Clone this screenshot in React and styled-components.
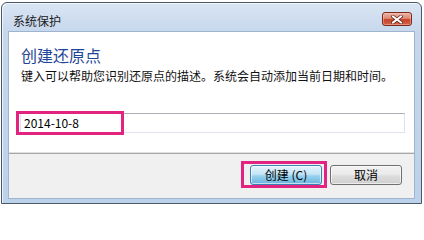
import React from "react";
import styled, { createGlobalStyle } from "styled-components";

const GlobalStyle = createGlobalStyle`
  html, body {
    margin: 0;
    padding: 0;
    background: #ffffff;
  }
  body {
    font-family: "Noto Sans CJK SC", "Noto Sans", sans-serif;
  }
`;

const Page = styled.div`
  width: 424px;
  height: 208px;
  padding: 2px 0 0 1px;
  box-sizing: border-box;
`;

const Window = styled.div`
  width: 421px;
  height: 202px;
  box-sizing: border-box;
  border: 1px solid #4b5666;
  border-radius: 6px 6px 0 0;
  background: linear-gradient(#d9e5f3 0px, #c6d7ec 30px, #bcd1ea 100%);
  box-shadow: inset 1px 1px 0 rgba(255, 255, 255, 0.7);
  display: flex;
  flex-direction: column;
`;

const TitleBar = styled.div`
  height: 28px;
  display: flex;
  justify-content: space-between;
  align-items: flex-start;
  padding: 0 9px 0 11px;
  flex-shrink: 0;
`;

const Title = styled.span`
  margin-top: 10px;
  font-size: 12px;
  line-height: 16px;
  color: #1b1b1b;
`;

const CloseButton = styled.div`
  margin-top: 9px;
  width: 30px;
  height: 14px;
  box-sizing: border-box;
  border: 1px solid #7d2a1c;
  border-radius: 3px;
  background: linear-gradient(#eab4a6 0%, #de8a74 45%, #c7432a 55%, #d2644a 100%);
  box-shadow: inset 0 0 0 1px rgba(255, 200, 190, 0.45);
  display: flex;
  align-items: center;
  justify-content: center;
`;

const Client = styled.div`
  margin: 0 6px;
  height: 168px;
  box-sizing: border-box;
  border: 1px solid #9fb4cf;
  display: flex;
  flex-direction: column;
`;

const Body = styled.div`
  height: 120px;
  background: #ffffff;
  padding: 13px 9px 0 11px;
  box-sizing: border-box;
`;

const Heading = styled.div`
  padding-left: 1px;
  font-size: 16px;
  line-height: 20px;
  color: #1f4597;
`;

const Description = styled.div`
  padding-left: 1px;
  margin-top: 3px;
  font-size: 12px;
  line-height: 16px;
  color: #111111;
  white-space: nowrap;
`;

const Marked = styled.div`
  position: relative;
  display: ${(p) => (p.block ? "block" : "inline-block")};

  &::after {
    content: "";
    position: absolute;
    left: ${(p) => p.l}px;
    top: ${(p) => p.t}px;
    width: ${(p) => p.w}px;
    height: ${(p) => p.h}px;
    box-sizing: border-box;
    border: 3px solid #e2237f;
    pointer-events: none;
  }
`;

const InputRow = styled(Marked)`
  margin-top: 29px;
`;

const TextBox = styled.div`
  height: 20px;
  box-sizing: border-box;
  border: 1px solid #e0e4ea;
  border-top-color: #abadb3;
  padding-left: 3px;
  font-size: 12px;
  line-height: 18px;
  color: #000000;
`;

const Footer = styled.div`
  flex: 1;
  background: #f0f0f0;
  border-top: 1px solid #dfdfdf;
  box-shadow: inset 0 1px 0 #a8a8a8;
  display: flex;
  justify-content: flex-end;
  align-items: flex-start;
  gap: 8px;
  padding: 12px 12px 0 0;
`;

const Button = styled.div`
  width: 72px;
  height: 20px;
  box-sizing: border-box;
  border: 1px solid ${(p) => (p.primary ? "#3c7fb1" : "#707070")};
  border-radius: 3px;
  background: ${(p) =>
    p.primary
      ? "linear-gradient(#e5f4fc 0%, #c4e5f6 45%, #98d1ef 55%, #68b3db 100%)"
      : "linear-gradient(#f2f2f2 0%, #ebebeb 45%, #dddddd 55%, #cfcfcf 100%)"};
  box-shadow: inset 0 0 0 1px rgba(255, 255, 255, 0.6);
  display: flex;
  align-items: center;
  justify-content: center;
  font-size: 12px;
  line-height: 16px;
  color: #000000;
`;

const CloseIcon = () => (
  <svg width="12" height="9" viewBox="0 0 12 9">
    <path
      d="M2 1.5 L10 7.5 M10 1.5 L2 7.5"
      stroke="#5a1a10"
      strokeWidth="3.4"
      strokeLinecap="square"
      fill="none"
    />
    <path
      d="M2 1.5 L10 7.5 M10 1.5 L2 7.5"
      stroke="#ffffff"
      strokeWidth="2"
      strokeLinecap="square"
      fill="none"
    />
  </svg>
);

const App = () => {
  return (
    <Page>
      <GlobalStyle />
      <Window>
        <TitleBar>
          <Title>系统保护</Title>
          <CloseButton>
            <CloseIcon />
          </CloseButton>
        </TitleBar>
        <Client>
          <Body>
            <Heading>创建还原点</Heading>
            <Description>
              键入可以帮助您识别还原点的描述。系统会自动添加当前日期和时间。
            </Description>
            <InputRow block l={-4} t={-2} w={108} h={24}>
              <TextBox>2014-10-8</TextBox>
            </InputRow>
          </Body>
          <Footer>
            <Marked l={-9} t={-4} w={86} h={27}>
              <Button primary>创建 (C)</Button>
            </Marked>
            <Button>取消</Button>
          </Footer>
        </Client>
      </Window>
    </Page>
  );
};

export default App;
